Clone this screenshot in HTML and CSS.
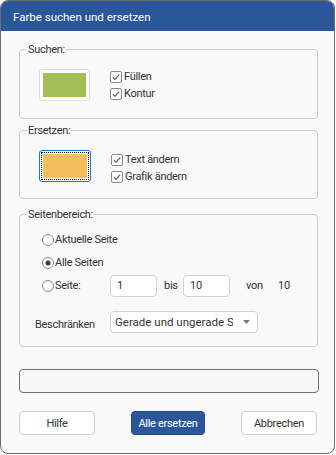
FILE: index.html
```html
<!DOCTYPE html>
<html lang="de">
<head>
  <meta charset="UTF-8">
  <meta name="viewport" content="width=device-width, initial-scale=1.0">
  <title>Farbe suchen und ersetzen</title>
  <link rel="stylesheet" href="styles.css">
</head>
<body>
  <div class="window">
    <div class="titlebar">Farbe suchen und ersetzen</div>

    <div class="content">
      <!-- Suchen -->
      <fieldset class="group group-find">
        <legend>Suchen:</legend>
        <div class="group-body swatch-row">
          <div class="swatch">
            <div class="swatch-color green"></div>
          </div>
          <div class="checks">
            <label class="check">
              <svg width="12" height="12" viewBox="0 0 12 12"><rect x="0.5" y="0.5" width="11" height="11" rx="1.5" fill="#fff" stroke="#8a8a8a"/><path d="M2.8 6.2 L5 8.4 L9.2 3.6" fill="none" stroke="#5f5f5f" stroke-width="1.2"/></svg>
              <span>Füllen</span>
            </label>
            <label class="check">
              <svg width="12" height="12" viewBox="0 0 12 12"><rect x="0.5" y="0.5" width="11" height="11" rx="1.5" fill="#fff" stroke="#8a8a8a"/><path d="M2.8 6.2 L5 8.4 L9.2 3.6" fill="none" stroke="#5f5f5f" stroke-width="1.2"/></svg>
              <span>Kontur</span>
            </label>
          </div>
        </div>
      </fieldset>

      <!-- Ersetzen -->
      <fieldset class="group group-replace">
        <legend>Ersetzen:</legend>
        <div class="group-body swatch-row">
          <div class="swatch focused">
            <div class="focus-dots">
              <div class="swatch-color orange"></div>
            </div>
          </div>
          <div class="checks">
            <label class="check">
              <svg width="12" height="12" viewBox="0 0 12 12"><rect x="0.5" y="0.5" width="11" height="11" rx="1.5" fill="#fff" stroke="#8a8a8a"/><path d="M2.8 6.2 L5 8.4 L9.2 3.6" fill="none" stroke="#5f5f5f" stroke-width="1.2"/></svg>
              <span>Text ändern</span>
            </label>
            <label class="check">
              <svg width="12" height="12" viewBox="0 0 12 12"><rect x="0.5" y="0.5" width="11" height="11" rx="1.5" fill="#fff" stroke="#8a8a8a"/><path d="M2.8 6.2 L5 8.4 L9.2 3.6" fill="none" stroke="#5f5f5f" stroke-width="1.2"/></svg>
              <span>Grafik ändern</span>
            </label>
          </div>
        </div>
      </fieldset>

      <!-- Seitenbereich -->
      <fieldset class="group group-range">
        <legend>Seitenbereich:</legend>
        <div class="group-body range-body">
          <label class="radio-row">
            <svg width="12" height="12" viewBox="0 0 12 12"><circle cx="6" cy="6" r="5.5" fill="#fff" stroke="#8a8a8a"/></svg>
            <span>Aktuelle Seite</span>
          </label>
          <label class="radio-row">
            <svg width="12" height="12" viewBox="0 0 12 12"><circle cx="6" cy="6" r="5.5" fill="#fff" stroke="#8a8a8a"/><circle cx="6" cy="6" r="2.5" fill="#3c3c3c"/></svg>
            <span>Alle Seiten</span>
          </label>
          <div class="radio-row pages">
            <label class="page-radio">
              <svg width="12" height="12" viewBox="0 0 12 12"><circle cx="6" cy="6" r="5.5" fill="#fff" stroke="#8a8a8a"/></svg>
              <span>Seite:</span>
            </label>
            <div class="textbox">1</div>
            <span class="word-bis">bis</span>
            <div class="textbox">10</div>
            <span class="word-von">von</span>
            <span>10</span>
          </div>
          <div class="limit-row">
            <div class="limit-label">Beschränken auf:</div>
            <div class="select">
              <span class="select-text">Gerade und ungerade Seiten</span>
              <svg class="select-arrow" width="7" height="4" viewBox="0 0 7 4"><path d="M0 0 H7 L3.5 4 Z" fill="#7a7a7a"/></svg>
            </div>
          </div>
        </div>
      </fieldset>

      <div class="progress"></div>

      <div class="buttons">
        <button class="btn">Hilfe</button>
        <button class="btn btn-primary">Alle ersetzen</button>
        <button class="btn">Abbrechen</button>
      </div>
    </div>
  </div>
</body>
</html>
```

FILE: styles.css
```css
/* General */
body {
  margin: 0;
  background: #ffffff;
  font-family: Roboto, "Liberation Sans", sans-serif;
  font-size: 11px;
  letter-spacing: -0.3px;
  color: #333333;
}

.window {
  width: 335px;
  height: 454px;
  box-sizing: border-box;
  border: 1px solid #6e6e6e;
  border-radius: 8px;
  background: #f9f9f9;
  overflow: hidden;
}

/* Title bar */
.titlebar {
  height: 30px;
  display: flex;
  align-items: center;
  padding-left: 12px;
  padding-top: 1px;
  box-sizing: border-box;
  background: #2b579a;
  color: #ffffff;
  font-size: 11.5px;
  letter-spacing: 0;
}

.content {
  padding: 12px 0 0 18px;
}

/* Group boxes */
.group {
  width: 299px;
  box-sizing: border-box;
  margin: 0;
  padding: 0;
  min-width: 0;
  border: 1px solid #cccccc;
  border-radius: 4px;
}

.group legend {
  margin-left: 7px;
  padding: 0 1px;
  line-height: 13px;
}

.group-find { margin-bottom: 5px; }
.group-replace { margin-bottom: 9px; }

.swatch-row {
  display: flex;
  align-items: center;
  padding: 13px 0 17px 19px;
}

.group-replace .swatch-row {
  padding-bottom: 16px;
}

/* Colour swatches */
.swatch {
  width: 51px;
  height: 32px;
  box-sizing: border-box;
  padding: 3px;
  background: #ffffff;
  border: 1px solid #dcdcdc;
  border-radius: 3px;
}

.swatch-color {
  width: 100%;
  height: 100%;
}

.green { background: #a2be55; }
.orange { background: #f2bf5b; }

.swatch.focused {
  width: 52px;
  padding: 1px;
  border-color: #1a73d1;
}

.focus-dots {
  height: 100%;
  box-sizing: border-box;
  padding: 1px;
  border: 1px dotted #000000;
}

/* Checkboxes */
.checks {
  height: 32px;
  box-sizing: border-box;
  margin-left: 20px;
  display: flex;
  flex-direction: column;
  justify-content: center;
}

.group-replace .checks {
  padding-top: 4px;
}

.check {
  display: flex;
  align-items: center;
  flex: none;
  height: 17px;
  gap: 2px;
}

/* Page range */
.range-body {
  padding: 7px 0 13px 15px;
}

.radio-row {
  display: flex;
  align-items: center;
  height: 23px;
  gap: 1px;
  margin-left: 7px;
}

.page-radio {
  display: flex;
  align-items: center;
  gap: 1px;
  width: 67px;
}

.textbox {
  width: 47px;
  height: 22px;
  box-sizing: border-box;
  border: 1px solid #d2d2d2;
  border-radius: 4px;
  background: #ffffff;
  padding-left: 6px;
  line-height: 20px;
}

.word-bis {
  width: 24px;
  padding-left: 6px;
  box-sizing: border-box;
}

.word-von {
  width: 46px;
  padding-left: 15px;
  box-sizing: border-box;
}

.limit-row {
  display: flex;
  align-items: center;
  margin-top: 14px;
}

.limit-label {
  width: 75px;
  height: 17px;
  line-height: 13px;
  padding-top: 4px;
  box-sizing: border-box;
  overflow: hidden;
}

.select {
  width: 148px;
  height: 22px;
  box-sizing: border-box;
  display: flex;
  align-items: center;
  border: 1px solid #d2d2d2;
  border-radius: 4px;
  background: #ffffff;
  padding: 0 7px 0 4px;
}

.select-text {
  flex: 1;
  white-space: nowrap;
  overflow: hidden;
  font-size: 11.5px;
  letter-spacing: 0;
}

.select-arrow {
  margin-left: 10px;
}

/* Progress bar */
.progress {
  width: 300px;
  height: 24px;
  box-sizing: border-box;
  margin-top: 22px;
  border: 1px solid #6f6f6f;
  border-radius: 4px;
  background: #f7f7f7;
}

/* Buttons */
.buttons {
  display: flex;
  margin-top: 18px;
}

.btn {
  height: 24px;
  width: 76px;
  font-family: Roboto, "Liberation Sans", sans-serif;
  font-size: 11px;
  letter-spacing: -0.3px;
  color: #333333;
  background: #ffffff;
  border: 1px solid #d0d0d0;
  border-radius: 4px;
  padding: 0;
}

.btn-primary {
  width: 74px;
  margin-left: 36px;
  margin-right: 36px;
  background: #2b579a;
  border-color: #244b86;
  color: #ffffff;
}
```
